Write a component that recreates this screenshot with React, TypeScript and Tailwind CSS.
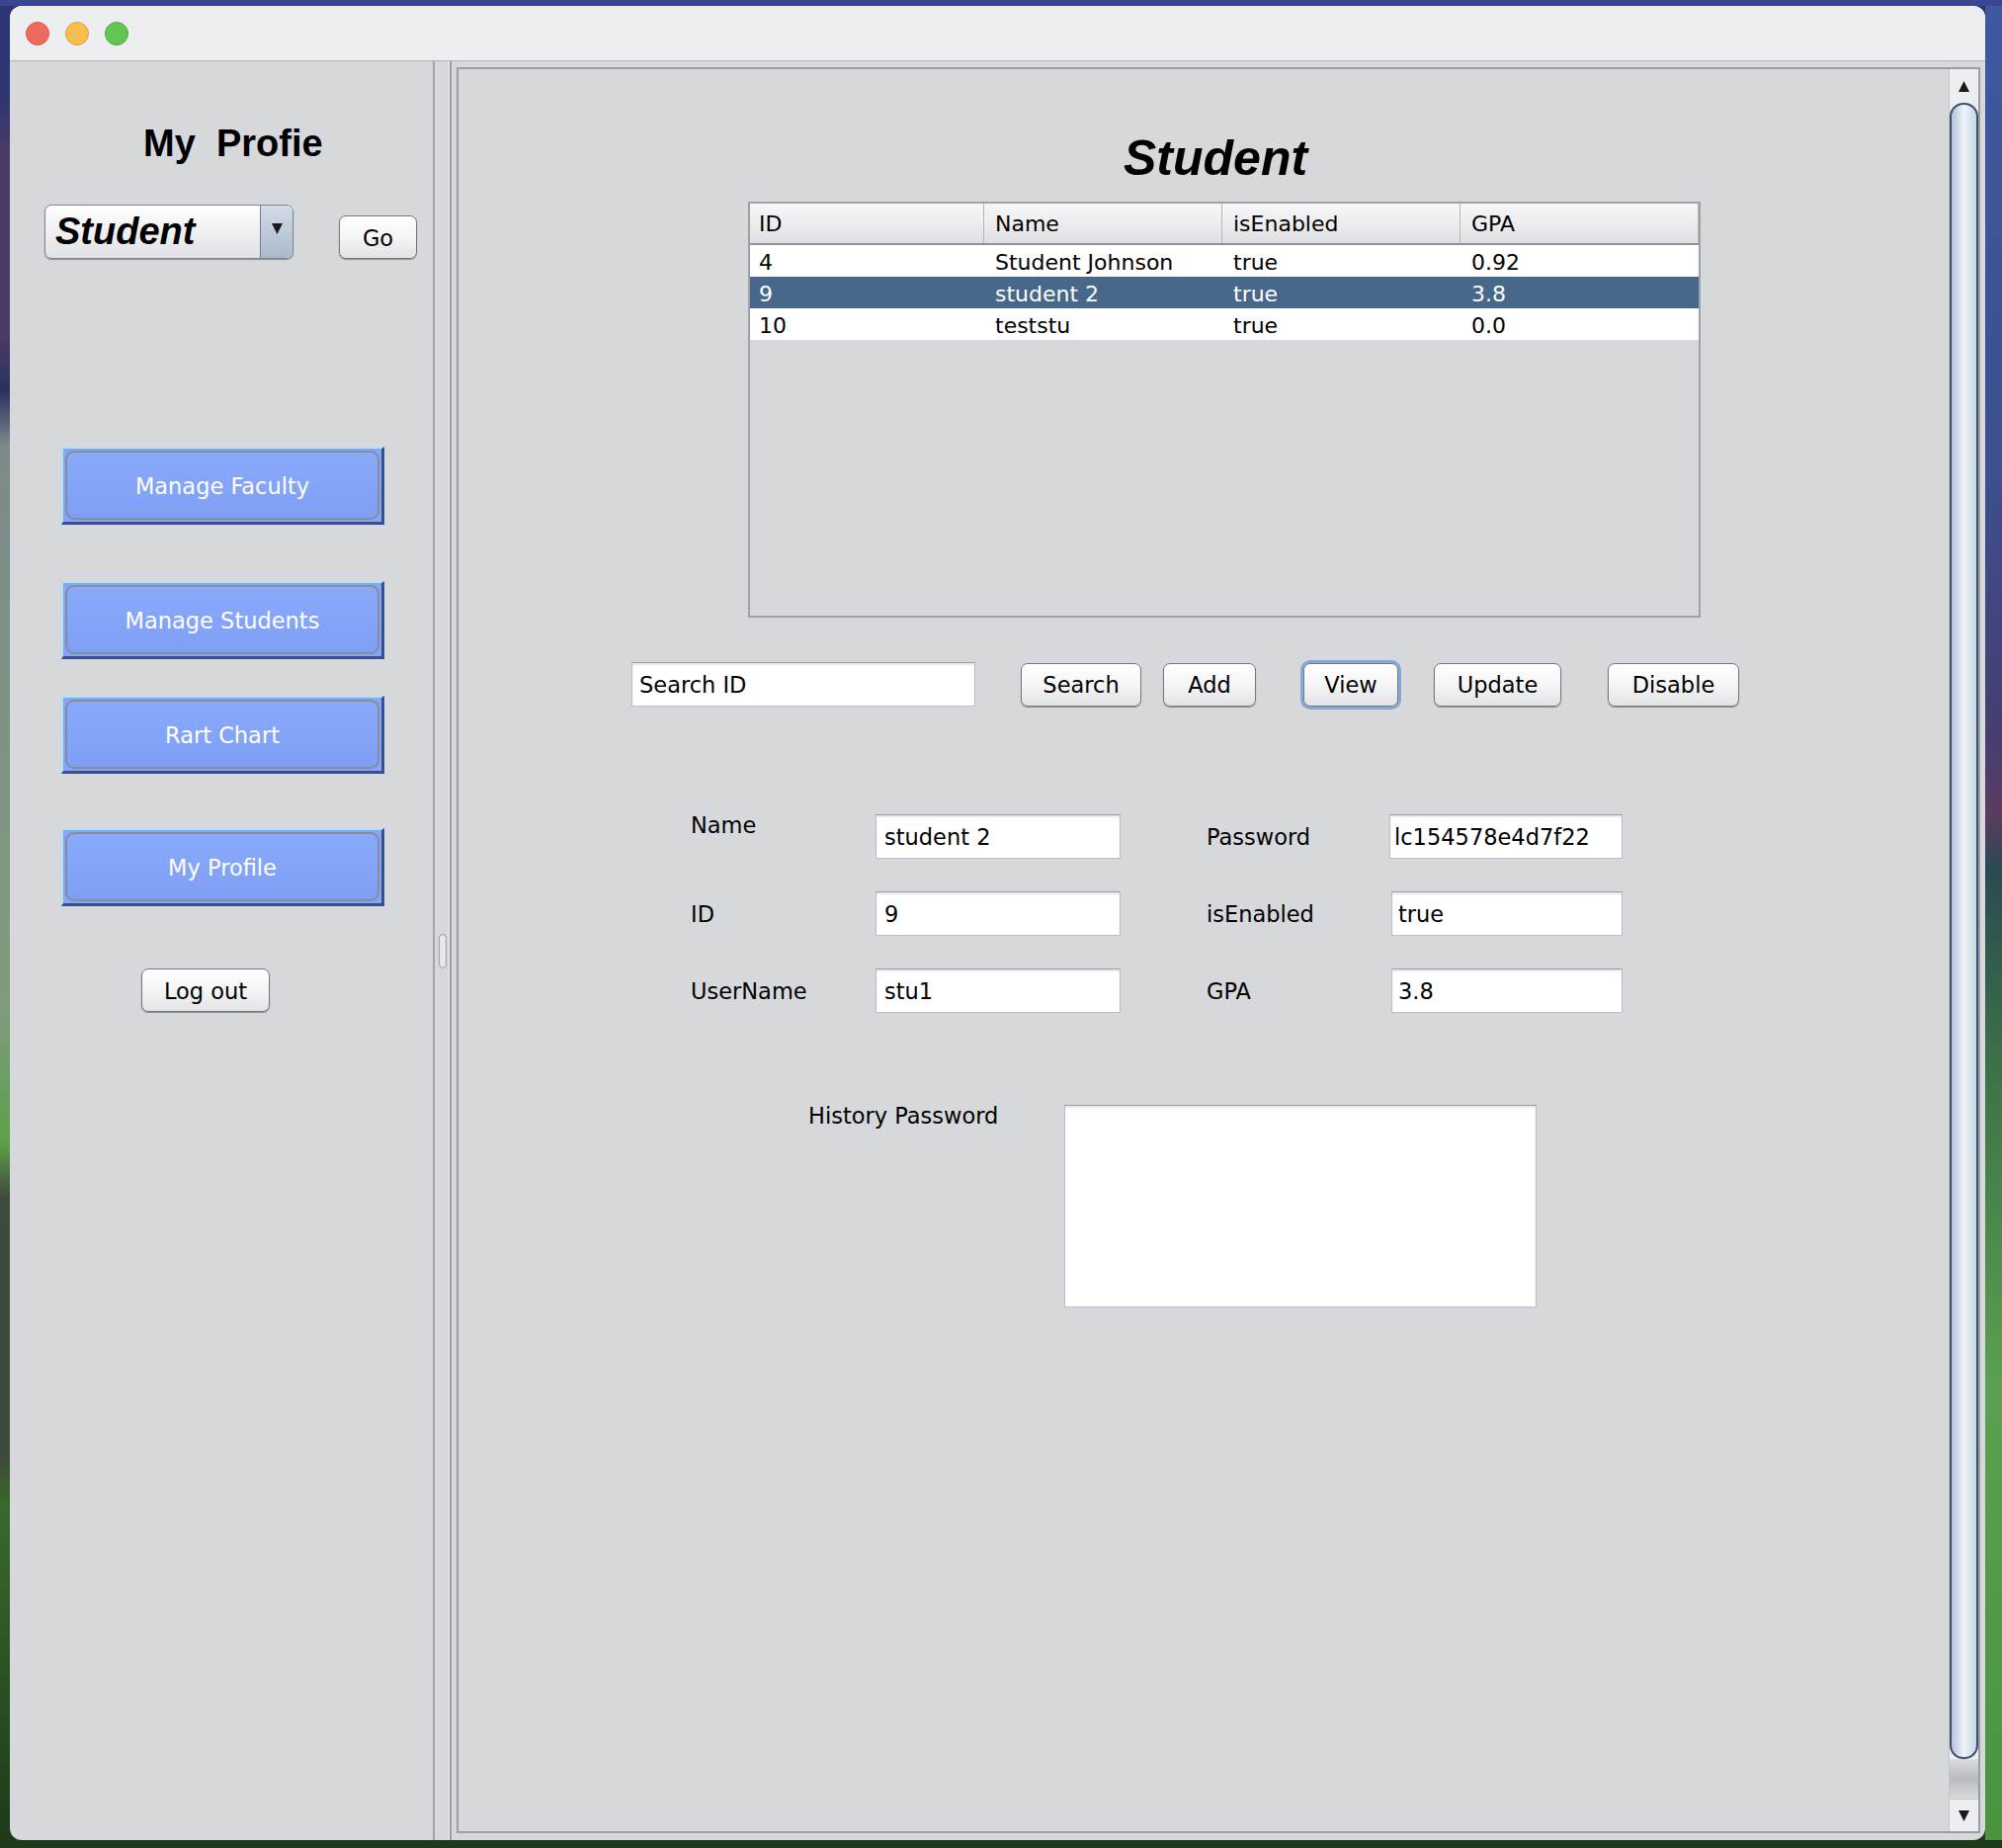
import React from "react";

const ui = "font-['DejaVu_Sans','Liberation_Sans',sans-serif]";
const heavy = "font-['Liberation_Sans',Arial,sans-serif] font-bold";

type Btn = { label: string; className?: string };

const AquaButton = ({ label, className = "" }: Btn) => (
  <div
    className={`flex h-[44px] items-center justify-center rounded-[7px] border border-[#74777d] bg-gradient-to-b from-white via-[#f5f5f6] to-[#e2e3e6] pt-[3px] text-[22.5px] text-black shadow-[0_1px_1px_rgba(0,0,0,0.35)] ${className}`}
  >
    {label}
  </div>
);

const NavButton = ({ label, className = "" }: Btn) => (
  <div
    className={`ml-[52px] h-[79px] w-[327px] border-t-2 border-l-2 border-b-[3px] border-r-[3px] border-t-[#aee3f3] border-l-[#aee3f3] border-b-[#3a4f8f] border-r-[#3a4f8f] bg-[#84a5f8] p-[2px] ${className}`}
  >
    <div className="flex h-full items-center justify-center rounded-[9px] border-2 border-[#878c99] bg-gradient-to-b from-[#89aafa] to-[#7e9ff5] pt-[4px] text-[22.5px] text-white">
      {label}
    </div>
  </div>
);

const Field = ({ value, className = "" }: { value: string; className?: string }) => (
  <div
    className={`flex h-[45px] items-center overflow-hidden whitespace-nowrap border border-[#bcbec2] border-t-[#9a9ca1] bg-white pt-[2px] text-[22.5px] text-black shadow-[inset_0_2px_2px_rgba(0,0,0,0.1)] ${className}`}
  >
    {value}
  </div>
);

const columns = [
  { name: "ID", w: "w-[237px] pl-[9px]" },
  { name: "Name", w: "w-[241px] pl-[11px]" },
  { name: "isEnabled", w: "w-[241px] pl-[11px]" },
  { name: "GPA", w: "w-[241px] pl-[11px]" },
];

const rows = [
  ["4", "Student Johnson", "true", "0.92"],
  ["9", "student 2", "true", "3.8"],
  ["10", "teststu", "true", "0.0"],
];

const StudentTable = () => (
  <div className="ml-[293px] mt-[14px] h-[421px] w-[964px] border-2 border-[#9ea1a8] bg-[#d7d8dc]">
    <div className="flex h-[42px] border-b-2 border-[#8e9198] bg-gradient-to-b from-[#f7f7f8] via-[#ededef] to-[#dedfe2]">
      {columns.map((c) => (
        <div key={c.name} className={`flex items-center border-r border-[#b3b6bb] text-[22px] ${c.w}`}>
          {c.name}
        </div>
      ))}
    </div>
    {rows.map((r, i) => (
      <div
        key={r[0]}
        className={`flex h-[32px] pt-[3px] text-[22px] leading-[29px] ${i === 1 ? "bg-[#47688a] text-white" : "bg-white text-black"}`}
      >
        {r.map((cell, j) => (
          <div key={j} className={columns[j].w}>
            {cell}
          </div>
        ))}
      </div>
    ))}
  </div>
);

const FormRow = ({
  label,
  value,
  label2,
  value2,
  raised,
  shift,
}: {
  label: string;
  value: string;
  label2: string;
  value2: string;
  raised?: boolean;
  shift?: boolean;
}) => (
  <div className="ml-[235px] flex h-[45px]">
    <div className={`w-[187px] ${raised ? "-mt-[5px] self-start" : "flex items-center pt-[2px]"}`}>{label}</div>
    <Field value={value} className="w-[248px] pl-[8px]" />
    <div className="w-[87px]" />
    <div className={`flex items-center pt-[2px] ${shift ? "w-[187px]" : "w-[185px]"}`}>{label2}</div>
    <Field value={value2} className={shift ? "w-[234px] pl-[6px]" : "w-[236px] pl-[4px]"} />
  </div>
);

const Triangle = ({ up }: { up?: boolean }) => (
  <svg width="11" height="11" viewBox="0 0 11 11">
    <path d={up ? "M5.5 0L11 11H0z" : "M0 0h11L5.5 11z"} fill="#1a1a1a" />
  </svg>
);

export default function App() {
  return (
    <div className={`flex h-[1870px] w-[2026px] flex-col overflow-hidden ${ui} text-[22.5px] text-black`}>
      <div className="h-[6px] bg-[#3b4592]" />
      <div className="flex flex-1 bg-[linear-gradient(180deg,#2f3572_0%,#2f3572_5%,#4a3b66_8%,#4a3b66_18%,#2b315f_21%,#7d8a8a_24%,#7f9a7c_55%,#5aa14b_62%,#3f4b3b_65%,#3e4a3a_79%,#386a2c_82%,#1e3a1a_100%)]">
        <div className="w-[10px]" />
        {/* window */}
        <div className="flex w-[1999px] flex-col overflow-hidden rounded-[12px] bg-[#d7d8dc]">
          <div className="flex h-[56px] items-center gap-[16px] border-b border-[#b3b5b9] bg-[#edeef0] pl-[16px]">
            <div className="h-[24px] w-[24px] rounded-full border border-[#d8574c] bg-[#ee6a5f]" />
            <div className="h-[24px] w-[24px] rounded-full border border-[#d9a13b] bg-[#f5be4f]" />
            <div className="h-[24px] w-[24px] rounded-full border border-[#4fa83f] bg-[#62c554]" />
          </div>

          <div className="flex flex-1">
            {/* sidebar */}
            <div className="flex w-[428px] flex-col">
              <div className={`ml-[135px] mt-[61px] h-[44px] whitespace-pre text-[38px] leading-[44px] ${heavy}`}>My  Profie</div>
              <div className="mt-[40px] flex h-[55px] items-end">
                <div className="ml-[35px] flex h-[55px] w-[252px] overflow-hidden rounded-[7px] border border-[#7f8288] bg-gradient-to-b from-white to-[#e0e1e5] shadow-[0_1px_1px_rgba(0,0,0,0.35)]">
                  <div className={`flex flex-1 items-center pl-[10px] text-[38px] italic ${heavy}`}>Student</div>
                  <div className="flex w-[33px] items-center justify-center border-l border-[#6f7d92] bg-gradient-to-b from-[#d3dce8] to-[#a9b9cd] pb-[6px]">
                    <Triangle />
                  </div>
                </div>
                <AquaButton label="Go" className="ml-[46px] w-[79px]" />
              </div>
              <NavButton label="Manage Faculty" className="mt-[190px]" />
              <NavButton label="Manage Students" className="mt-[57px]" />
              <NavButton label="Rart Chart" className="mt-[37px]" />
              <NavButton label="My Profile" className="mt-[55px]" />
              <AquaButton label="Log out" className="ml-[133px] mt-[63px] w-[130px]" />
            </div>

            {/* split divider */}
            <div className="flex w-[19px] items-center justify-center border-l-2 border-r-2 border-l-[#a0a3a9] border-r-[#9a9da4] shadow-[inset_-1px_0_0_#eeeff1]">
              <div className="h-[35px] w-[8px] rounded-full border border-[#9a9da3] bg-[#e6e7ea]" />
            </div>

            {/* main area */}
            <div className="flex flex-1 pb-[7px] pl-[5px] pr-[5px] pt-[6px]">
              <div className="flex flex-1 border-2 border-[#9a9da4]">
                <div className="flex flex-1 flex-col">
                  <div className="ml-[673px] mt-[60px] h-[60px] font-['Liberation_Sans',Arial,sans-serif] text-[50px] font-bold italic leading-[60px]">
                    Student
                  </div>
                  <StudentTable />

                  <div className="mt-[45px] flex h-[45px] items-center">
                    <Field value="Search ID" className="ml-[175px] w-[348px] pl-[7px]" />
                    <AquaButton label="Search" className="ml-[46px] w-[122px]" />
                    <AquaButton label="Add" className="ml-[22px] w-[94px]" />
                    <AquaButton label="View" className="ml-[48px] w-[96px] ring-[3px] ring-[#86a6d7]" />
                    <AquaButton label="Update" className="ml-[36px] w-[129px]" />
                    <AquaButton label="Disable" className="ml-[47px] w-[133px]" />
                  </div>

                  <div className="mt-[109px] flex flex-col gap-[33px]">
                    <FormRow label="Name" value="student 2" label2="Password" value2="lc154578e4d7f22" raised />
                    <FormRow label="ID" value="9" label2="isEnabled" value2="true" shift />
                    <FormRow label="UserName" value="stu1" label2="GPA" value2="3.8" shift />
                  </div>

                  <div className="ml-[354px] mt-[93px] flex items-start">
                    <div className="-mt-[5px] w-[259px]">History Password</div>
                    <div className="h-[205px] w-[478px] border border-[#bcbec2] border-t-[#9a9ca1] bg-white shadow-[inset_0_2px_2px_rgba(0,0,0,0.1)]" />
                  </div>
                </div>

                {/* scrollbar */}
                <div className="flex w-[30px] flex-col border-l border-[#c4c6ca] bg-[#eceef1]">
                  <div className="flex h-[34px] items-center justify-center">
                    <Triangle up />
                  </div>
                  <div className="flex-1 rounded-[14px] border-2 border-[#3a4e70] bg-gradient-to-r from-[#b4c4d8] via-[#eef3f8] to-[#c9d6e5]" />
                  <div className="h-[40px] bg-gradient-to-b from-[#dcdde0] via-[#b8babf] to-[#d9dadd]" />
                  <div className="flex h-[33px] items-center justify-center border-t border-[#c4c6ca]">
                    <Triangle />
                  </div>
                </div>
              </div>
            </div>
          </div>
        </div>
        <div className="w-[17px] bg-[linear-gradient(180deg,#3f58a2_0%,#3c5090_25%,#463e70_40%,#5c3c60_44%,#2a4a52_47%,#3d7248_58%,#5aa050_75%,#4a9440_100%)]" />
      </div>
      <div className="h-[8px] bg-[#1f3a1a]" />
    </div>
  );
}
